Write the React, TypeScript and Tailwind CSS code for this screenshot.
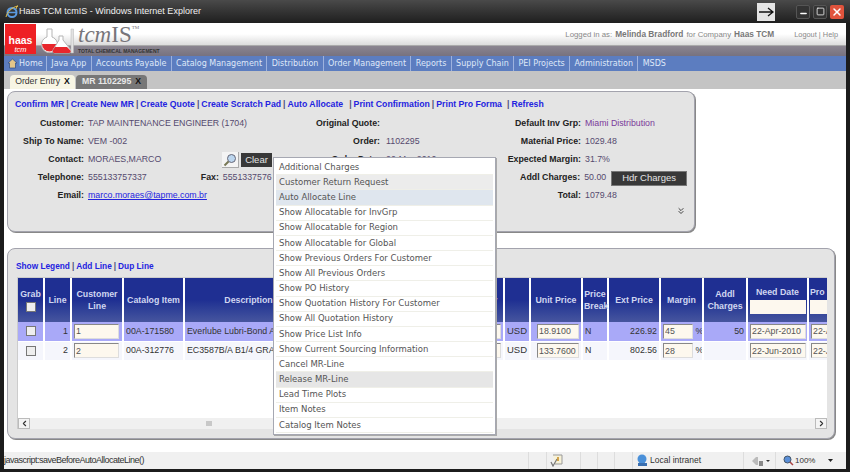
import { ChevronLeft, ChevronRight, ChevronsDown, Minus, Square, X } from 'lucide-react';

const navItems = [
  'Java App',
  'Accounts Payable',
  'Catalog Management',
  'Distribution',
  'Order Management',
  'Reports',
  'Supply Chain',
  'PEI Projects',
  'Administration',
  'MSDS',
];

const menuItems = [
  ['Additional Charges', ''],
  ['Customer Return Request', 'bg-[#ececec]'],
  ['Auto Allocate Line', 'bg-[#dfe6ee]'],
  ['Show Allocatable for InvGrp', ''],
  ['Show Allocatable for Region', ''],
  ['Show Allocatable for Global', ''],
  ['Show Previous Orders For Customer', ''],
  ['Show All Previous Orders', ''],
  ['Show PO History', ''],
  ['Show Quotation History For Customer', ''],
  ['Show All Quotation History', ''],
  ['Show Price List Info', ''],
  ['Show Current Sourcing Information', ''],
  ['Cancel MR-Line', ''],
  ['Release MR-Line', 'bg-[#e6e6e6]'],
  ['Lead Time Plots', ''],
  ['Item Notes', ''],
  ['Catalog Item Notes', ''],
];

const topLinks = ['Confirm MR', 'Create New MR', 'Create Quote', 'Create Scratch Pad'];

function Flasks() {
  return (
    <svg width="34" height="26" viewBox="0 0 34 26" className="shrink-0">
      <path d="M7 1h5v8a8 8 0 1 1-5 0z" fill="#fff" stroke="#b5b5b5" />
      <path d="M2 16h15a7.500 7.500 0 0 1-15 0z" fill="#e8262c" />
      <path d="M19 8h4v4l8 10a2 2 0 0 1-2 3H15a2 2 0 0 1-2-3l6-10z" fill="#fff" stroke="#b5b5b5" />
      <path d="M15 19h12l4 4a2 2 0 0 1-2 2H15a2 2 0 0 1-2-3z" fill="#e8262c" />
      <path d="M31 1h2.500v24H31z" fill="#e2e2e2" stroke="#b5b5b5" strokeWidth="0.5" />
    </svg>
  );
}

function IeIcon() {
  return (
    <svg width="14" height="14" viewBox="0 0 14 14" className="shrink-0">
      <circle cx="7" cy="7.500" r="4.500" fill="none" stroke="#5b9ae0" strokeWidth="2" />
      <path d="M3 7.500h8" stroke="#5b9ae0" strokeWidth="1.500" />
      <path d="M1 12c1-5 6-10 12-11-2 0-1 2-2 3" fill="none" stroke="#e8c34a" strokeWidth="1" />
    </svg>
  );
}

function Label({ w, children }: { w: string; children: React.ReactNode }) {
  return <div className={`${w} shrink-0 whitespace-nowrap pr-[4px] text-right font-bold text-[#222]`}>{children}</div>;
}

function Row({ children }: { children: React.ReactNode }) {
  return <div className="flex h-[18px] items-center">{children}</div>;
}

function Cell({ value, cls = '' }: { value: string; cls?: string }) {
  return (
    <input
      readOnly
      value={value}
      className={`h-[15px] border border-t-[#888] border-l-[#888] border-r-[#ddd] border-b-[#ddd] bg-[#fdf8ee] px-[1px] align-middle text-[8.8px] text-[#555] outline-none ${cls}`}
    />
  );
}

function LineRow({ bg, line, item, desc, price, ext, margin, addl, date }: Record<string, string>) {
  const td = 'border-r-2 border-b border-white px-[2px] overflow-hidden whitespace-nowrap';
  return (
    <tr className={`h-[19px] ${bg} text-[8.8px] text-[#333]`}>
      <td className={`${td} text-center`}>
        <span className="inline-block h-[10px] w-[10px] border border-[#777] bg-[#eee] align-middle" />
      </td>
      <td className={`${td} text-right`}>{line}</td>
      <td className={td}>
        <Cell value={line} cls="w-[45px]" />
      </td>
      <td className={td}>{item}</td>
      <td className={td}>{desc}</td>
      <td className={td} />
      <td className={`${td} text-right`}>
        <Cell value="" cls="w-[40px]" />
      </td>
      <td className={`${td} text-center text-[9.500px]`}>USD</td>
      <td className={`${td} text-right`}>
        <Cell value={price} cls="w-[42px]" />
      </td>
      <td className={td}>N</td>
      <td className={`${td} text-right`}>{ext}</td>
      <td className={td}>
        <Cell value={margin} cls="w-[30px]" /> <span className="text-[8.8px]">%</span>
      </td>
      <td className={`${td} text-right`}>{addl}</td>
      <td className={`${td} text-center`}>
        <Cell value={date} cls="w-[56px]" />
      </td>
      <td className={td}>
        <Cell value={date} cls="w-[56px]" />
      </td>
    </tr>
  );
}

export default function App() {
  const th = 'border-r-2 border-white px-[1px] text-center font-bold leading-[12px]';
  return (
    <div className="relative flex h-[472px] w-[850px] flex-col overflow-hidden bg-[#1c1c1c] font-['Liberation_Sans',sans-serif] text-[8.8px] text-[#333]">
      {/* title bar */}
      <div className="flex h-[23px] shrink-0 items-center bg-gradient-to-b from-[#4a4a4a] to-[#1f1f1f] pl-[5px] pr-[6px]">
        <IeIcon />
        <span className="text-[9px] text-[#f0f0f0]">Haas TCM tcmIS - Windows Internet Explorer</span>
        <div className="ml-auto mr-[21px] flex h-[18px] w-[18px] items-center justify-center bg-[#e4e4e4]">
          <svg width="15" height="10" viewBox="0 0 15 10">
            <path d="M0 5h13M9 1l5 4-5 4" fill="none" stroke="#111" strokeWidth="1.300" />
          </svg>
        </div>
        <div className="flex items-center gap-[3px]">
          <div className="flex h-[14px] w-[14px] items-end justify-center rounded-[2px] border border-[#555] bg-[#333]">
            <Minus size={9} strokeWidth={4} className="text-white" />
          </div>
          <div className="flex h-[14px] w-[14px] items-center justify-center rounded-[2px] border border-[#555] bg-[#333]">
            <Square size={9} strokeWidth={2} className="text-white" />
          </div>
          <div className="flex h-[14px] w-[14px] items-center justify-center rounded-[2px] bg-[#e0533c]">
            <X size={12} strokeWidth={3} className="text-white" />
          </div>
        </div>
      </div>

      <div className="relative mx-[4px] mb-[3px] flex min-h-0 flex-1 flex-col bg-white">
        {/* app header */}
        <div className="flex h-[33px] shrink-0 flex-col">
          <div className="flex h-[22px] items-center justify-end bg-gradient-to-b from-white via-white to-[#dcdcdc] pr-[8px] pt-[1px] text-[7.800px] text-[#888]">
            <span>Logged in as:</span>
            <span className="ml-[3px] text-[8.300px] font-bold text-[#777]">Melinda Bradford</span>
            <span className="ml-[3px]">for Company</span>
            <span className="ml-[3px] text-[8.300px] font-bold text-[#777]">Haas TCM</span>
            <span className="ml-[20px] text-[7.400px]">Logout | Help</span>
          </div>
          <div className="h-[11px] border-t border-[#aaa] bg-gradient-to-b from-[#8b8590] to-[#77727f] pl-[74px] text-[5px] font-bold leading-[10px] text-[#333]">
            TOTAL CHEMICAL MANAGEMENT
          </div>
        </div>

        {/* nav */}
        <div className="flex h-[15px] shrink-0 items-center bg-[#5c7dc0] font-['DejaVu_Sans',sans-serif] text-[8px] text-[#dfe8f8]">
          <div className="flex h-full w-[43px] items-center border-r border-[#9db2de] pl-[3px]">
            <svg width="11" height="11" viewBox="0 0 11 11" className="mr-[1px]">
              <path d="M5.500 1L1 5h1.500v5h6V5H10z" fill="#e4c68a" stroke="#2b4a86" strokeWidth="0.700" />
            </svg>
            Home
          </div>
          {navItems.map((n) => (
            <div key={n} className="flex h-full items-center border-r border-[#9db2de] px-[4.350px] last:border-r-0">
              {n}
            </div>
          ))}
        </div>

        {/* tabs */}
        <div className="flex h-[18px] shrink-0 items-end gap-[1px] bg-[#c4c4c4] pl-[6px] text-[8.700px] font-bold">
          <div className="flex h-[14px] w-[65px] items-center justify-center gap-[4px] rounded-t-[4px] bg-[#f7f5e4] font-normal text-[#333]">
            Order Entry <b className="text-[#111]">X</b>
          </div>
          <div className="flex h-[14px] w-[71px] items-center justify-center gap-[4px] rounded-t-[4px] bg-[#777] text-[#e8e8e8]">
            MR 1102295 <b className="text-[#111]">X</b>
          </div>
        </div>

        {/* content */}
        <div className="flex min-h-0 flex-1 flex-col pl-[3px] pt-[2px]">
          {/* order header */}
          <div className="relative h-[141px] w-[688px] shrink-0 rounded-[8px] border border-[#a3a3ad] bg-[#e4e4e4] px-[7px] pt-[6px] shadow-[1px_1px_0_#888]">
            <div className="flex h-[13px] items-center whitespace-nowrap text-[8.700px] font-bold text-[#2323e0]">
              {topLinks.map((l) => (
                <span key={l} className="flex">
                  {l}
                  <span className="mx-[2px] text-[#50507a]">|</span>
                </span>
              ))}
              Auto Allocate
              <span className="ml-[6px] flex">
                <span className="mr-[2px] text-[#50507a]">|</span>Print Confirmation<span className="mx-[2px] text-[#50507a]">|</span>Print Pro Forma
                <span className="ml-[5px] mr-[2px] text-[#50507a]">|</span>Refresh
              </span>
            </div>
            <div className="mt-[4px] whitespace-nowrap text-[#554a6e]">
              <Row>
                <Label w="w-[73px]">Customer:</Label>
                <div className="w-[215px]">TAP MAINTENANCE  ENGINEER (1704)</div>
                <Label w="w-[81px]">Original Quote:</Label>
                <div className="w-[121px]" />
                <Label w="w-[80px]">Default Inv Grp:</Label>
                <div className="text-[#7a3a9a]">Miami Distribution</div>
              </Row>
              <Row>
                <Label w="w-[73px]">Ship To Name:</Label>
                <div className="w-[215px]">VEM -002</div>
                <Label w="w-[81px]">Order:</Label>
                <div className="ml-[2px] w-[119px]">1102295</div>
                <Label w="w-[80px]">Material Price:</Label>
                <div>1029.48</div>
              </Row>
              <Row>
                <Label w="w-[73px]">Contact:</Label>
                <div className="w-[134px]">MORAES,MARCO</div>
                <div className="flex h-[16px] w-[17px] items-center justify-center border-b border-r border-[#aaa] bg-[#f4f4f4]">
                  <svg width="14" height="14" viewBox="0 0 14 14">
                    <circle cx="8.500" cy="5.500" r="4" fill="#bcd6ee" stroke="#667" />
                    <path d="M5.500 8.500L1.500 12.500" stroke="#775" strokeWidth="2" />
                  </svg>
                </div>
                <div className="ml-[2px] flex h-[14px] w-[31px] items-center justify-center bg-[#383838] text-[9.500px] text-[#e4e4e4]">Clear</div>
                <div className="w-[31px]" />
                <Label w="w-[81px]">Order Date:</Label>
                <div className="ml-[2px] w-[119px]">22-Mar-2010</div>
                <Label w="w-[80px]">Expected Margin:</Label>
                <div>31.7%</div>
              </Row>
              <Row>
                <Label w="w-[73px]">Telephone:</Label>
                <div className="w-[113px]">555133757337</div>
                <div className="w-[22px] shrink-0 font-bold text-[#222]">Fax:</div>
                <div className="w-[80px]">5551337576</div>
                <div className="w-[81px]" />
                <div className="w-[121px]" />
                <Label w="w-[80px]">Addl Charges:</Label>
                <div className="w-[27px]">50.00</div>
                <div className="flex h-[15px] w-[76px] items-center justify-center border border-[#777] bg-[#383838] text-[9.500px] text-[#e4e4e4]">
                  Hdr Charges
                </div>
              </Row>
              <Row>
                <Label w="w-[73px]">Email:</Label>
                <div className="w-[215px] text-[#2323e0] underline">marco.moraes@tapme.com.br</div>
                <div className="w-[81px]" />
                <div className="w-[121px]" />
                <Label w="w-[80px]">Total:</Label>
                <div>1079.48</div>
              </Row>
            </div>
            <div className="mt-[1px] flex justify-end pr-[1px]">
              <ChevronsDown size={10} strokeWidth={2} className="text-[#222]" />
            </div>
          </div>

          {/* lines */}
          <div className="mt-[16px] flex h-[191px] w-[828px] shrink-0 flex-col rounded-[8px] border border-[#a3a3ad] bg-[#e4e4e4] pb-[9px] pl-[9px] pr-[7px] shadow-[1px_1px_0_#888]">
            <div className="-ml-[1px] mt-[11px] flex h-[13px] items-center text-[8.300px] font-bold text-[#2323e0]">
              Show Legend <span className="mx-[2px] text-[#50507a]">|</span> Add Line <span className="mx-[2px] text-[#50507a]">|</span> Dup Line
            </div>
            <div className="mt-[4px] flex min-h-0 flex-1 flex-col overflow-hidden border-t border-l border-[#ccc] bg-white">
              <div className="min-h-0 flex-1 overflow-hidden">
                <table className="w-[885px] table-fixed border-collapse">
                  <colgroup>
                    <col className="w-[26px]" />
                    <col className="w-[27px]" />
                    <col className="w-[52px]" />
                    <col className="w-[61px]" />
                    <col className="w-[129px]" />
                    <col className="w-[142px]" />
                    <col className="w-[49px]" />
                    <col className="w-[26px]" />
                    <col className="w-[52px]" />
                    <col className="w-[26px]" />
                    <col className="w-[52px]" />
                    <col className="w-[43px]" />
                    <col className="w-[44px]" />
                    <col className="w-[61px]" />
                    <col className="w-[95px]" />
                  </colgroup>
                  <thead>
                    <tr className="h-[44px] bg-gradient-to-b from-[#1f2f92] via-[#1f2f92] to-[#47559e] text-[8.800px] text-[#d0d6f0]">
                      <th className={th}>
                        Grab
                        <span className="mx-auto mt-[2px] block h-[10px] w-[10px] border border-[#777] bg-[#eee]" />
                      </th>
                      <th className={th}>Line</th>
                      <th className={th}>
                        Customer
                        <br />
                        Line
                      </th>
                      <th className={th}>Catalog Item</th>
                      <th className={th}>Description</th>
                      <th className={th} />
                      <th className={th}>Quantity</th>
                      <th className={th} />
                      <th className={th}>Unit Price</th>
                      <th className={th}>
                        Price
                        <br />
                        Break
                      </th>
                      <th className={th}>Ext Price</th>
                      <th className={th}>Margin</th>
                      <th className={th}>
                        Addl
                        <br />
                        Charges
                      </th>
                      <th className={th}>
                        Need Date
                        <span className="mx-auto mt-[2px] block h-[14px] w-[56px] bg-[#fdf8ee]" />
                      </th>
                      <th className={`${th} text-left`}>
                        Pro
                        <span className="mt-[2px] block h-[14px] w-[56px] bg-[#fdf8ee]" />
                      </th>
                    </tr>
                  </thead>
                  <tbody>
                    <LineRow
                      bg="bg-[#a9a9f8]"
                      line="1"
                      item="00A-171580"
                      desc="Everlube Lubri-Bond A"
                      price="18.9100"
                      ext="226.92"
                      margin="45"
                      addl="50"
                      date="22-Apr-2010"
                    />
                    <LineRow
                      bg="bg-[#f5f6fc]"
                      line="2"
                      item="00A-312776"
                      desc="EC3587B/A B1/4 GRAY"
                      price="133.7600"
                      ext="802.56"
                      margin="28"
                      addl=""
                      date="22-Jun-2010"
                    />
                  </tbody>
                </table>
              </div>
              {/* scrollbar */}
              <div className="flex h-[11px] shrink-0 items-center bg-[#eeeeee]">
                <div className="flex h-[11px] w-[12px] items-center justify-center border border-[#bbb] bg-[#f4f4f4]">
                  <ChevronLeft size={9} strokeWidth={3} className="text-[#333]" />
                </div>
                <div className="flex h-[11px] flex-1 items-center bg-[#f0f0f0]">
                  <span className="ml-[176px] h-[5px] w-[6px] bg-[#c8c8c8]" />
                </div>
                <div className="flex h-[11px] w-[12px] items-center justify-center border border-[#bbb] bg-[#f4f4f4]">
                  <ChevronRight size={9} strokeWidth={3} className="text-[#333]" />
                </div>
              </div>
            </div>
          </div>
        </div>

        {/* status bar */}
        <div className="flex h-[17px] shrink-0 items-center bg-[#f0f0f0] text-[8.500px] text-[#333]">
          <span className="w-[524px] text-[9px] tracking-[-0.5px]">javascript:saveBeforeAutoAllocateLine()</span>
          <div className="h-full w-[18px] border-l border-[#ddd]" />
          <div className="flex h-full w-[34px] items-center border-l border-[#ddd] pl-[3px]">
            <svg width="13" height="13" viewBox="0 0 13 13">
              <path d="M3 1h9v9H5" fill="#f7f2d8" stroke="#999" />
              <path d="M1 8l2 4 4-7" fill="none" stroke="#777" strokeWidth="1.200" />
              <path d="M8 3v4" stroke="#c78a1e" strokeWidth="1.500" />
            </svg>
          </div>
          <div className="h-full w-[17px] border-l border-[#ddd]" />
          <div className="h-full w-[17px] border-l border-[#ddd]" />
          <div className="h-full w-[18px] border-l border-[#ddd]" />
          <div className="flex h-full w-[111px] items-center border-l border-[#ddd] pl-[3px]">
            <svg width="13" height="13" viewBox="0 0 13 13" className="mr-[1px]">
              <circle cx="6" cy="5" r="4.500" fill="#4a90d9" />
              <path d="M2 9h9v3H2z" fill="#3a6fb0" />
            </svg>
            Local intranet
          </div>
          <div className="flex h-full w-[32px] items-center border-l border-[#ddd] pl-[7px]">
            <svg width="19" height="12" viewBox="0 0 19 12">
              <path d="M1 6l4-4h2v8H5z" fill="#bbb" />
              <path d="M8 6h4v5H8z" fill="#888" />
              <path d="M15 5h4l-2 2z" fill="#333" />
            </svg>
          </div>
          <div className="flex h-full flex-1 items-center border-l border-[#ddd] pl-[7px]">
            <svg width="11" height="11" viewBox="0 0 11 11" className="mr-[1px]">
              <circle cx="4.500" cy="4.500" r="3.500" fill="#5a8fd8" stroke="#456" />
              <path d="M7 7l3 3" stroke="#a44" strokeWidth="1.500" />
            </svg>
            <span className="text-[8px]">100%</span>
            <svg width="5" height="3" viewBox="0 0 5 3" className="ml-[13px]">
              <path d="M0 0h5L2.500 3z" fill="#222" />
            </svg>
          </div>
        </div>
      </div>

      {/* context menu */}
      <div className="absolute left-[273px] top-[157px] w-[223px] border border-[#a6a8b2] bg-white pb-[1px] pl-[2px] pr-[2px] pt-[2px] font-['DejaVu_Sans',sans-serif] text-[8.500px] text-[#555] shadow-[1px_1px_0_#aaa]">
        {menuItems.map(([label, bg]) => (
          <div key={label} className={`flex h-[15.180px] items-center border-b border-[#efefe8] pl-[3px] ${bg}`}>
            {label}
          </div>
        ))}
      </div>

      {/* logo over the header */}
      <div className="absolute left-[5px] top-[24px] flex items-start">
        <div className="flex h-[30px] w-[31px] flex-col items-center justify-end bg-[#ee2024] text-white">
          <span className="text-[10.500px] font-bold leading-[11px]">haas</span>
          <span className="text-[7.500px] italic leading-[8px]">tcm</span>
        </div>
        <div className="ml-[4px] mt-[4px]">
          <Flasks />
        </div>
        <div className="ml-[4px] flex items-baseline font-['Liberation_Serif',serif] leading-[22px] text-[#77757a]">
          <span className="text-[23px] italic">tcm</span>
          <span className="text-[23px]">IS</span>
          <span className="self-start text-[5px] leading-[8px]">TM</span>
        </div>
      </div>
    </div>
  );
}
